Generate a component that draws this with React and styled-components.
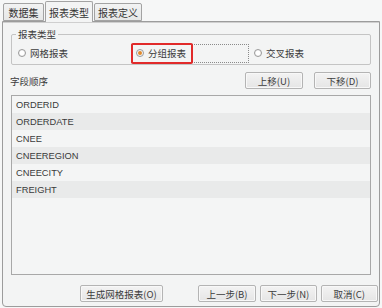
import React from "react";
import styled, { createGlobalStyle } from "styled-components";

const Global = createGlobalStyle`
  html, body { margin: 0; padding: 0; background: #f6f7f7; }
  * { box-sizing: border-box; }
`;

const CJK = `"Noto Sans CJK SC", "Microsoft YaHei", sans-serif`;

const Window = styled.div`
  width: 382px;
  height: 308px;
  display: flex;
  flex-direction: column;
  padding: 0 2px 1px 2px;
  background: #f6f7f7;
  font-family: ${CJK};
  font-size: 9.5px;
  color: #3c3c3c;
`;

const TabBar = styled.div`
  height: 21px;
  display: flex;
  align-items: flex-end;
  gap: 1px;
  padding-left: 1px;
  position: relative;
  z-index: 1;
`;

const Tab = styled.div`
  width: ${(p) => p.$w}px;
  height: ${(p) => (p.$active ? 21 : 18)}px;
  margin-bottom: ${(p) => (p.$active ? -1 : 0)}px;
  display: flex;
  align-items: center;
  justify-content: center;
  padding-top: ${(p) => (p.$active ? 1 : 0)}px;
  font-size: 10px;
  color: #333;
  border: 1px solid #a3a3a3;
  border-bottom: ${(p) => (p.$active ? "none" : "1px solid #a3a3a3")};
  border-radius: 2px 2px 0 0;
  background: ${(p) =>
    p.$active ? "#f3f4f4" : "linear-gradient(#f2f3f3, #e6e7e7)"};
`;

const Panel = styled.div`
  flex: 1;
  display: flex;
  flex-direction: column;
  border: 1px solid #9c9c9c;
  border-radius: 0 0 4px 4px;
  background: #f3f4f4;
  box-shadow: inset 0 1px 0 #cfcfcf;
  padding: 0 8px 4px 8px;
`;

const GroupBox = styled.div`
  position: relative;
  margin-top: 12px;
  height: 31px;
  border: 1px solid #c4c4c4;
  border-radius: 2px;
  display: flex;
  align-items: center;
  padding: 7px 0 0 1px;
`;

const Legend = styled.span`
  position: absolute;
  left: 4px;
  top: -7px;
  padding: 0 2px;
  background: #f3f4f4;
  line-height: 12px;
  font-size: 9.5px;
  color: #3c3c3c;
`;

const RadioItem = styled.label`
  position: relative;
  width: 118px;
  height: 19px;
  display: flex;
  align-items: center;
  gap: 4px;
  padding-left: 4px;
  border: 1px dotted ${(p) => (p.$focus ? "#8a8a8a" : "transparent")};
`;

const RadioCircle = styled.span`
  width: 8px;
  height: 8px;
  border-radius: 50%;
  border: 1px solid #9a9a9a;
  background: radial-gradient(circle, #ffffff 40%, #e6e6e6 100%);
  display: flex;
  align-items: center;
  justify-content: center;
  flex: none;
  &::after {
    content: "";
    width: 4px;
    height: 4px;
    border-radius: 50%;
    background: ${(p) => (p.$checked ? "#e0892c" : "transparent")};
  }
`;

const Highlight = styled.span`
  position: absolute;
  left: -1px;
  top: -2px;
  width: 62px;
  height: 21px;
  border: 2px solid #e12a2a;
  border-radius: 2px;
  pointer-events: none;
`;

const HeaderRow = styled.div`
  margin-top: 7px;
  height: 17px;
  display: flex;
  align-items: center;
  gap: 11px;
`;

const Label = styled.span`
  flex: 1;
  margin-left: -1px;
  color: #3c3c3c;
`;

const Button = styled.button`
  width: ${(p) => p.$w}px;
  height: 17px;
  padding: 0;
  font-family: ${CJK};
  font-size: 9.5px;
  color: #3c3c3c;
  border: 1px solid #b4b4b4;
  border-radius: 2px;
  background: linear-gradient(#f3f3f3, #e5e5e5);
  box-shadow: inset 0 0 0 1px #f8f8f8;
  display: flex;
  align-items: center;
  justify-content: center;
`;

const List = styled.div`
  margin-top: 6px;
  height: 180px;
  border: 1px solid #a8a8a8;
  background: #f4f5f5;
  display: flex;
  flex-direction: column;
`;

const Row = styled.div`
  height: 17px;
  flex: none;
  display: flex;
  align-items: center;
  padding-left: 4px;
  font-family: "Liberation Sans", Arial, sans-serif;
  font-size: 9.3px;
  color: #3a3a3a;
  background: ${(p) => (p.$alt ? "#e9eaea" : "#f4f5f5")};
`;

const Footer = styled.div`
  margin-top: 10px;
  margin-right: -7px;
  display: flex;
  gap: 4px;
  padding-left: 69px;
`;

const Spacer = styled.div`
  width: 27px;
`;

const fields = ["ORDERID", "ORDERDATE", "CNEE", "CNEEREGION", "CNEECITY", "FREIGHT"];

export default function App() {
  return (
    <>
      <Global />
      <Window>
        <TabBar>
          <Tab $w={41}>数据集</Tab>
          <Tab $w={48} $active>报表类型</Tab>
          <Tab $w={48}>报表定义</Tab>
        </TabBar>
        <Panel>
          <GroupBox>
            <Legend>报表类型</Legend>
            <RadioItem>
              <RadioCircle />
              网格报表
            </RadioItem>
            <RadioItem $focus>
              <RadioCircle $checked />
              分组报表
              <Highlight />
            </RadioItem>
            <RadioItem>
              <RadioCircle />
              交叉报表
            </RadioItem>
          </GroupBox>
          <HeaderRow>
            <Label>字段顺序</Label>
            <Button $w={58}>上移(U)</Button>
            <Button $w={57}>下移(D)</Button>
          </HeaderRow>
          <List>
            {fields.map((f, i) => (
              <Row key={f} $alt={i % 2 === 1}>{f}</Row>
            ))}
          </List>
          <Footer>
            <Button $w={84}>生成网格报表(O)</Button>
            <Spacer />
            <Button $w={59}>上一步(B)</Button>
            <Button $w={57}>下一步(N)</Button>
            <Button $w={58}>取消(C)</Button>
          </Footer>
        </Panel>
      </Window>
    </>
  );
}
